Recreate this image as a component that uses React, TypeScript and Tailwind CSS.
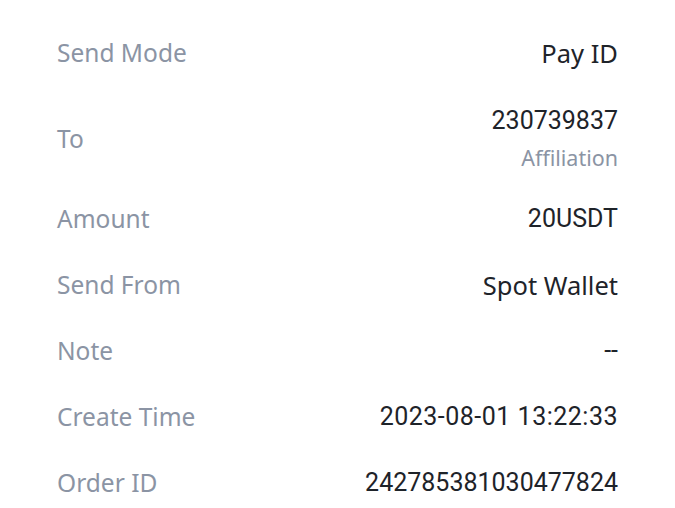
import React from "react";

function Row({ label, value, numeric, wide }: { label: string; value: string; numeric?: boolean; wide?: boolean }) {
  return (
    <div className="flex h-[66px] items-center justify-between">
      <span className="font-['Noto_Sans','Open_Sans',sans-serif] text-[24.5px] text-[#8b94a4]">{label}</span>
      <span
        className={
          numeric
            ? wide
              ? "font-['Roboto','Noto_Sans',sans-serif] text-[25px] tracking-[0.5px] text-[#1e2329]"
              : "font-['Roboto','Noto_Sans',sans-serif] text-[25px] text-[#1e2329]"
            : "font-['Noto_Sans','Open_Sans',sans-serif] text-[25.5px] text-[#1e2329]"
        }
      >
        {value}
      </span>
    </div>
  );
}

export default function App() {
  return (
    <div className="min-h-[508px] w-[675px] bg-white px-[57px] pt-[20px]">
      <Row label="Send Mode" value="Pay ID" />
      <div className="flex h-[100px] items-center justify-between pt-[6px]">
        <span className="font-['Noto_Sans','Open_Sans',sans-serif] text-[24.5px] text-[#8b94a4]">To</span>
        <div className="flex flex-col items-end">
          <span className="font-['Roboto','Noto_Sans',sans-serif] text-[25px] leading-[30px] text-[#1e2329]">230739837</span>
          <span className="mt-[7px] font-['Noto_Sans','Open_Sans',sans-serif] text-[21.5px] leading-[30px] text-[#8b94a4]">
            Affiliation
          </span>
        </div>
      </div>
      <Row label="Amount" value="20USDT" numeric />
      <Row label="Send From" value="Spot Wallet" />
      <Row label="Note" value="--" numeric />
      <Row label="Create Time" value="2023-08-01 13:22:33" numeric wide />
      <Row label="Order ID" value="242785381030477824" numeric />
    </div>
  );
}
